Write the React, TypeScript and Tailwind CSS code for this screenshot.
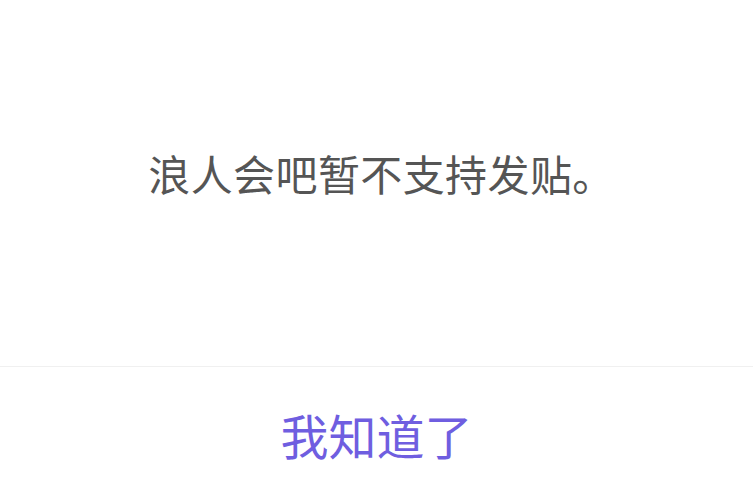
export default function App() {
  return (
    <div
      className="w-[753px] h-[501px] bg-white flex flex-col"
      style={{ fontFamily: '"Noto Sans CJK SC", "Noto Sans", sans-serif' }}
    >
      <div className="h-[366px] flex items-start justify-center pt-[147px] pl-[10px]">
        <p className="text-[42px] leading-[52px] tracking-[0.4px] text-[#555555]">浪人会吧暂不支持发贴。</p>
      </div>
      <div className="h-px bg-[#f0f0f0]" />
      <div className="flex-1 flex items-start justify-center pt-[36px]">
        <button className="text-[48px] leading-[62px] text-[#6f5ee0]">我知道了</button>
      </div>
    </div>
  );
}
